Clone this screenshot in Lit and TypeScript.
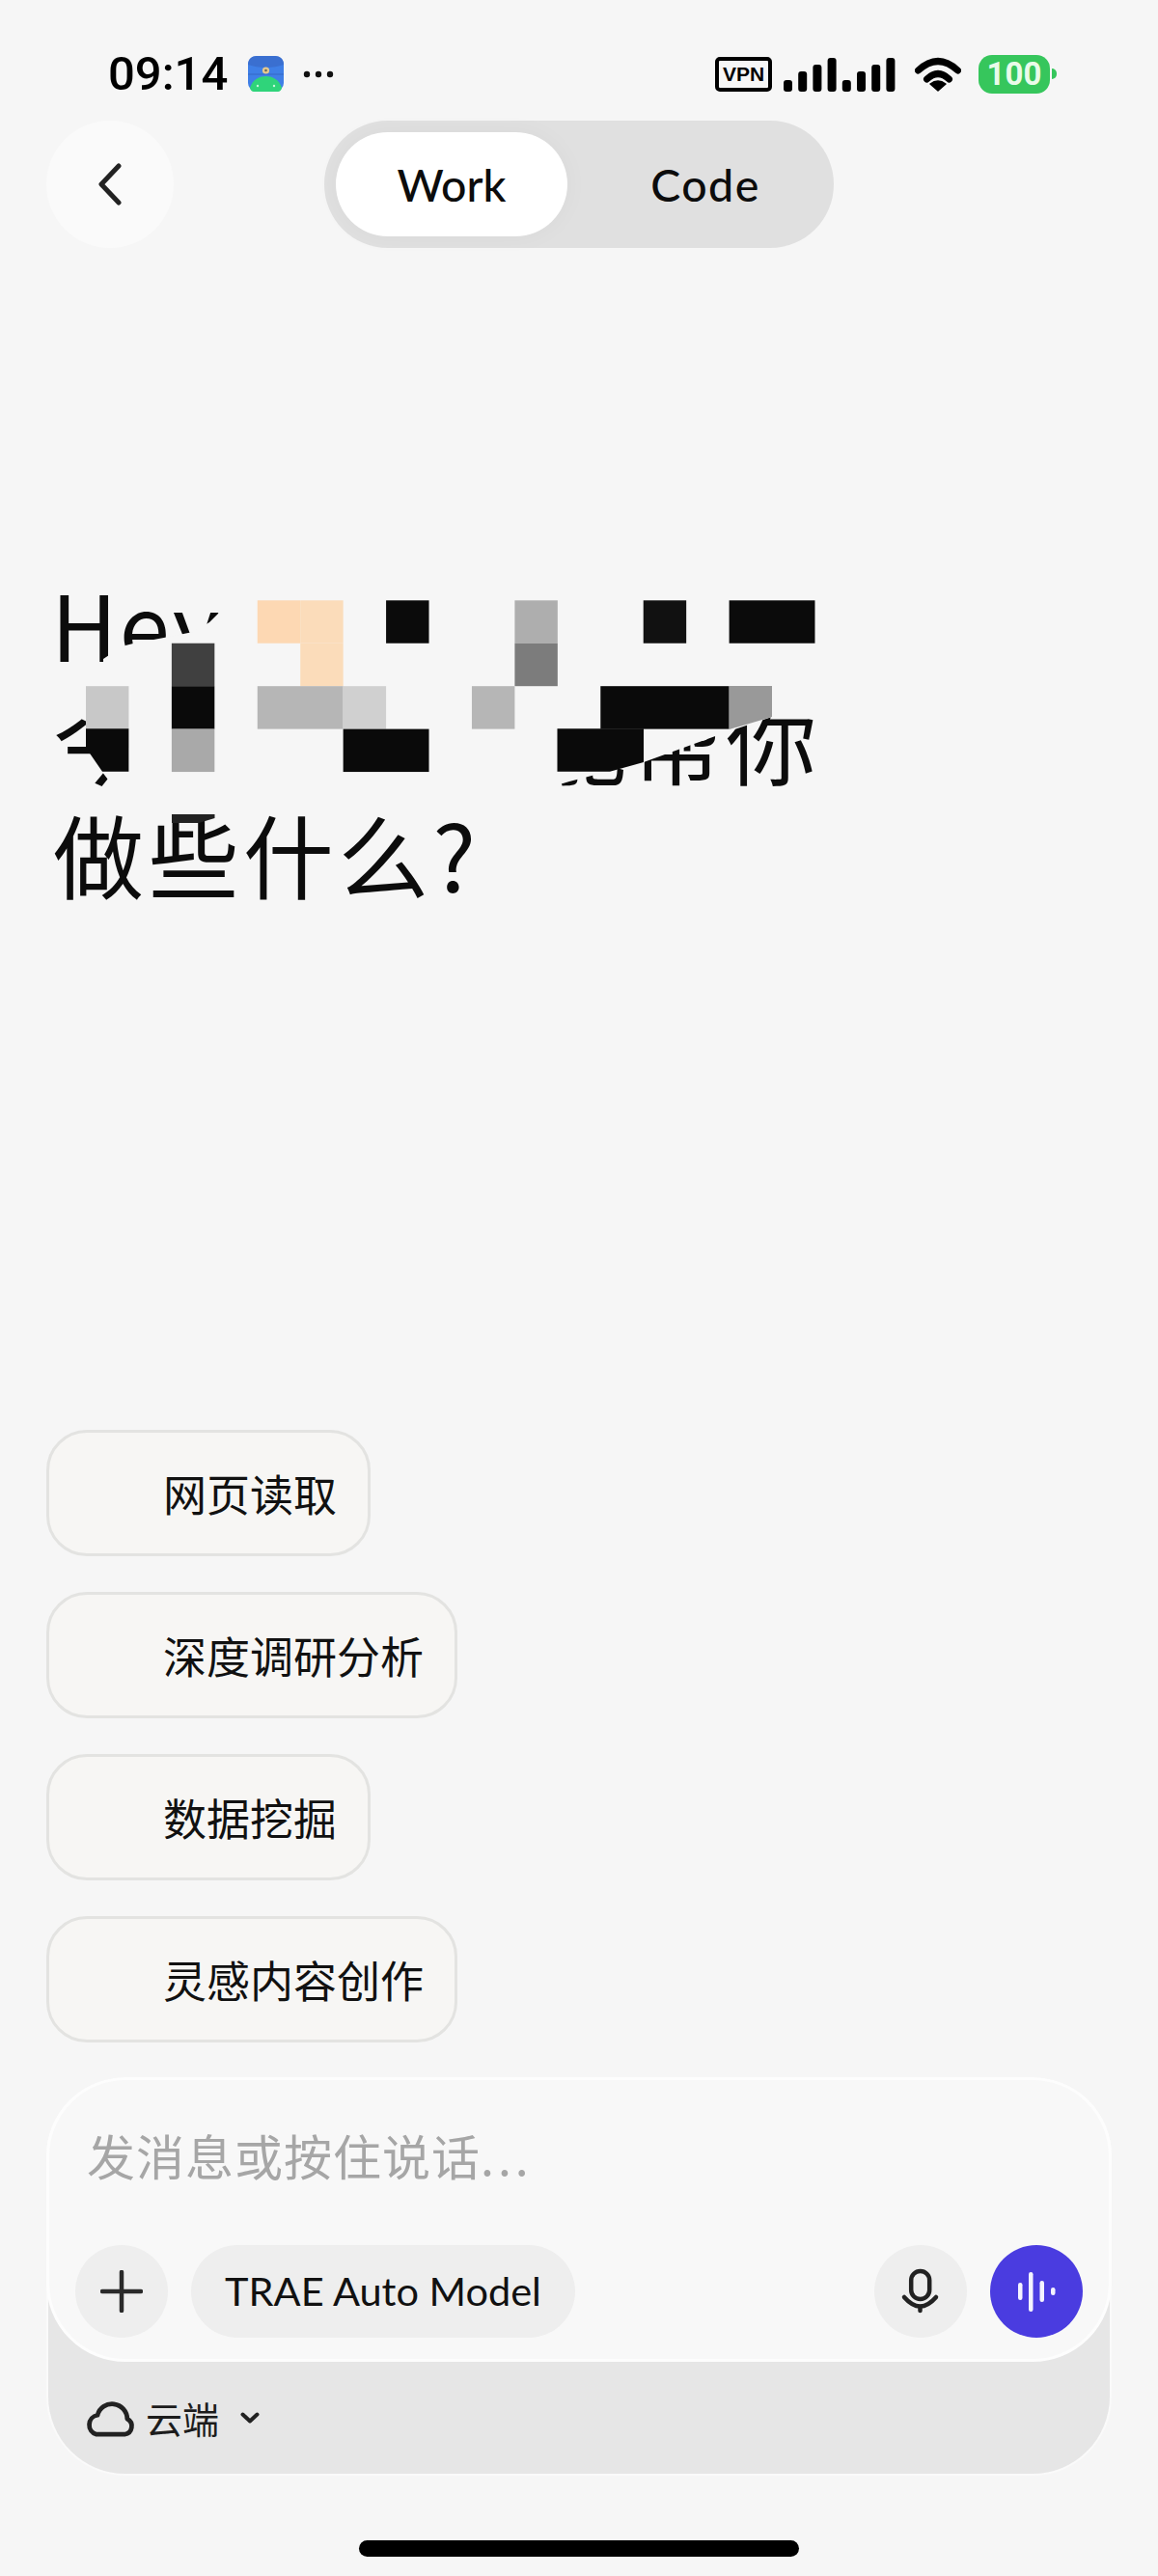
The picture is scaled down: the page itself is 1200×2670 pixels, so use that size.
import { LitElement, html, css, svg } from "lit";
import { customElement } from "lit/decorators.js";

const CELL = 44.44;
const X0 = 89;
const Y0 = 622.3;
// [row, col, span, fill]
const CELLS: [number, number, number, string][] = [
  [0, 4, 1, "#fdd8b3"],
  [0, 5, 1, "#fbdcba"],
  [0, 7, 1, "#0b0b0b"],
  [0, 10, 1, "#aeaeae"],
  [0, 13, 1, "#111111"],
  [0, 15, 2, "#0b0b0b"],
  [1, 2, 1, "#404040"],
  [1, 5, 1, "#fbdcba"],
  [1, 10, 1, "#7c7c7c"],
  [2, 0, 1, "#c8c8c8"],
  [2, 2, 1, "#0a0a0a"],
  [2, 4, 2, "#b6b6b6"],
  [2, 6, 1, "#d0d0d0"],
  [2, 9, 1, "#b6b6b6"],
  [2, 12, 3, "#0a0a0a"],
  [3, 2, 1, "#a9a9a9"],
  [3, 6, 2, "#0a0a0a"],
];
// Cells whose corner is cut by the redaction edge
const CLIPPED: [string, string][] = [
  ["89,755.3 133.4,755.3 133.4,799.7 106,799.7 89,775", "#0a0a0a"],
  ["577.5,755.3 667,755.3 667,790 632,799.7 577.5,799.7", "#0a0a0a"],
  ["755.7,711 800,711 800,743 755.7,756", "#999999"],
  ["178,844 222.5,844 222.5,848 206,853 178,853", "#222222"],
];
const MASK =
  "232,600 852,600 852,735 820,737 800,743 755,758 667,790 590,810 570,816 118,816 102,795 90,775 " +
  "90,748 84,745 84,715 107,690 107,683 116,677 130,669 138,667 175,660 200,655 217,645 232,630";

const SIGNAL = [12, 21, 28, 35, 12, 21, 28, 35];

@customElement("app-root")
export class AppRoot extends LitElement {
  static styles = css`
    :host {
      display: block;
      width: 1200px;
      height: 2670px;
      background: #f6f6f6;
      font-family: "Noto Sans CJK SC", "Noto Sans", sans-serif;
      color: #0c0c0c;
    }
    .page {
      height: 2670px;
      display: flex;
      flex-direction: column;
      overflow: hidden;
    }
    .status {
      margin-top: 56px;
      height: 41px;
      padding: 0 105px 0 112px;
      display: flex;
      align-items: center;
      justify-content: space-between;
    }
    .status-left,
    .status-right {
      display: flex;
      align-items: center;
    }
    .time {
      font: 500 49px/41px Roboto, sans-serif;
      color: #000;
      width: 121px;
    }
    .app-icon {
      margin-left: 24px;
      display: block;
    }
    .more {
      margin-left: 20px;
      display: block;
    }
    .vpn {
      box-sizing: border-box;
      width: 59px;
      height: 36px;
      border: 4px solid #000;
      border-radius: 5px;
      display: flex;
      align-items: center;
      justify-content: center;
      font: 700 21px/1 "Liberation Sans", sans-serif;
      color: #000;
    }
    .signal {
      margin-left: 12px;
      display: block;
    }
    .wifi {
      margin-left: 20px;
      display: block;
    }
    .battery {
      margin-left: 18px;
      display: flex;
      align-items: center;
    }
    .battery-body {
      width: 74px;
      height: 40px;
      background: #36c65c;
      border-radius: 14px;
      display: flex;
      align-items: center;
      justify-content: center;
      font: 700 33px/1 Roboto, sans-serif;
      color: #e9fbe9;
    }
    .battery-nub {
      width: 5px;
      height: 11px;
      margin-left: 2px;
      background: #36c65c;
      border-radius: 0 5px 5px 0;
    }
    .header {
      margin-top: 28px;
      padding: 0 48px;
      display: grid;
      grid-template-columns: 1fr auto 1fr;
      align-items: center;
    }
    .back {
      width: 132px;
      height: 132px;
      border-radius: 50%;
      background: #fafafa;
      display: flex;
      align-items: center;
      justify-content: center;
    }
    .toggle {
      box-sizing: border-box;
      width: 528px;
      height: 132px;
      padding: 12px;
      border-radius: 66px;
      background: #e0e0e0;
      display: flex;
      align-items: center;
      font: 500 46.5px/1 Lato, "Noto Sans", sans-serif;
    }
    .seg {
      height: 108px;
      display: flex;
      align-items: center;
      justify-content: center;
    }
    .seg.on {
      width: 240px;
      border-radius: 54px;
      background: #fff;
      box-shadow: 0 0 26px rgba(0, 0, 0, 0.035);
    }
    .seg.off {
      flex: 1;
      padding-left: 22px;
      letter-spacing: 1.5px;
    }
    .hero {
      position: relative;
      margin-top: 332px;
      padding-left: 55px;
      font-size: 94px;
      line-height: 118px;
      letter-spacing: 4.4px;
      font-weight: 400;
      color: #0c0c0c;
      white-space: nowrap;
    }
    .hey {
      margin: -3px 0 3px -2px;
      letter-spacing: 2.4px;
    }
    .gap {
      display: inline-block;
      width: 402px;
    }
    .redact {
      position: absolute;
      left: 0;
      top: 0;
      display: block;
    }
    .chips {
      margin-top: auto;
      padding-left: 48px;
      display: flex;
      flex-direction: column;
      align-items: flex-start;
      gap: 37px;
    }
    .chip {
      box-sizing: border-box;
      height: 131px;
      padding: 0 32px 0 118px;
      border: 3px solid #e3e3e1;
      border-radius: 42px;
      background: #f7f6f4;
      display: flex;
      align-items: center;
      font-size: 45px;
      line-height: 1;
      color: #111;
    }
    .composer {
      box-sizing: border-box;
      margin: 36px 48px 0;
      height: 413px;
      border: 2px solid #fafafa;
      border-top: 0;
      border-radius: 82px;
      background: #e6e6e6;
      display: flex;
      flex-direction: column;
    }
    .box {
      box-sizing: border-box;
      margin: 0 -2px;
      height: 295px;
      padding: 47px 27px 0;
      border: 3px solid #fdfdfd;
      border-radius: 82px;
      background: #f8f8f8;
    }
    .placeholder {
      padding-left: 12px;
      font-size: 50px;
      line-height: 60px;
      letter-spacing: 1px;
      color: #a6a6a6;
    }
    .dots {
      letter-spacing: 4px;
    }
    .tools {
      margin-top: 64px;
      display: flex;
      align-items: center;
      gap: 24px;
    }
    .round {
      width: 96px;
      height: 96px;
      border-radius: 50%;
      background: #eeeeee;
      display: flex;
      align-items: center;
      justify-content: center;
      flex: none;
    }
    .round svg {
      display: block;
    }
    .model {
      box-sizing: border-box;
      width: 398px;
      height: 96px;
      border-radius: 48px;
      background: #eeeeee;
      display: flex;
      align-items: center;
      justify-content: center;
      font: 400 41.5px/1 Lato, "Noto Sans", sans-serif;
      color: #111;
    }
    .push {
      margin-left: auto;
    }
    .send {
      background: #4a3ce0;
    }
    .scope {
      flex: 1;
      padding-left: 37px;
      display: flex;
      align-items: center;
      font-size: 38px;
      line-height: 1;
      color: #1c1c1c;
    }
    .cloud {
      display: block;
      margin-right: 10px;
    }
    .chev {
      display: block;
      margin-left: 22px;
    }
    .home {
      margin: 67px auto 20px;
      width: 456px;
      height: 17px;
      border-radius: 9px;
      background: #000;
      flex: none;
    }
  `;

  private redaction() {
    return svg`
      <polygon points=${MASK} fill="#f6f6f6"></polygon>
      ${CELLS.map(
        ([r, c, span, fill]) => svg`<rect x=${X0 + c * CELL} y=${Y0 + r * CELL} width=${span * CELL} height=${CELL} fill=${fill}></rect>`
      )}
      ${CLIPPED.map(([points, fill]) => svg`<polygon points=${points} fill=${fill}></polygon>`)}
    `;
  }

  render() {
    return html`
      <div class="page">
        <div class="status">
          <div class="status-left">
            <span class="time">09:14</span>
            <svg class="app-icon" width="37" height="37" viewBox="0 0 37 37">
              <rect width="37" height="37" rx="9" fill="#3f7fe6"></rect>
              <path d="M0 9C0 3 4 0 9 0H28C33 0 37 3 37 9C26 13 11 13 0 9Z" fill="#3a6fd0"></path>
              <path d="M0 19H37" stroke="#3569c4" stroke-width="1"></path>
              <path d="M6 37Q3 37 2 33C5 24 12 21 18.5 21S32 24 35 33Q34 37 31 37Z" fill="#2fd47a"></path>
              <circle cx="18.5" cy="15" r="3.6" fill="#e6c98e"></circle>
              <circle cx="18.5" cy="15" r="1.3" fill="#6b6a55"></circle>
              <circle cx="10" cy="31" r="1.2" fill="#c8f5dc"></circle>
              <circle cx="27" cy="31" r="1.2" fill="#c8f5dc"></circle>
            </svg>
            <svg class="more" width="32" height="8" viewBox="0 0 32 8" fill="#111">
              <circle cx="4" cy="4" r="3.2"></circle>
              <circle cx="16" cy="4" r="3.2"></circle>
              <circle cx="28" cy="4" r="3.2"></circle>
            </svg>
          </div>
          <div class="status-right">
            <span class="vpn">VPN</span>
            <svg class="signal" width="116" height="36" viewBox="0 0 116 36" fill="#000">
              ${SIGNAL.map(
                (h, i) => svg`<rect x=${i * 15.2} y=${36 - h} width="9" height=${h} rx="3"></rect>`
              )}
            </svg>
            <svg class="wifi" width="48" height="36" viewBox="0 0 48 36">
              <path d="M3.5 14Q24 -5 44.5 14" fill="none" stroke="#000" stroke-width="7" stroke-linecap="round"></path>
              <path d="M12.5 23Q24 12 35.5 23" fill="none" stroke="#000" stroke-width="7" stroke-linecap="round"></path>
              <path d="M24 35L16 28Q24 22 32 28Z" fill="#000" stroke="#000" stroke-width="1.5" stroke-linejoin="round"></path>
            </svg>
            <div class="battery">
              <span class="battery-body">100</span>
              <span class="battery-nub"></span>
            </div>
          </div>
        </div>

        <div class="header">
          <div class="back">
            <svg width="24" height="44" viewBox="0 0 24 44">
              <path d="M21 3L3 22L21 41" fill="none" stroke="#222" stroke-width="5" stroke-linecap="round" stroke-linejoin="round"></path>
            </svg>
          </div>
          <div class="toggle">
            <div class="seg on">Work</div>
            <div class="seg off">Code</div>
          </div>
          <div></div>
        </div>

        <div class="hero">
          <div class="hey">Hey</div>
          <div>今<span class="gap"></span>能帮你</div>
          <div>做些什么?</div>
          <svg class="redact" width="1200" height="354" viewBox="0 589 1200 354">${this.redaction()}</svg>
        </div>

        <div class="chips">
          <div class="chip">网页读取</div>
          <div class="chip">深度调研分析</div>
          <div class="chip">数据挖掘</div>
          <div class="chip">灵感内容创作</div>
        </div>

        <div class="composer">
          <div class="box">
            <div class="placeholder">发消息或按住说话<span class="dots">...</span></div>
            <div class="tools">
              <div class="round">
                <svg width="44" height="44" viewBox="0 0 44 44">
                  <path d="M22 2V42M2 22H42" fill="none" stroke="#2a2a2a" stroke-width="4.5" stroke-linecap="round"></path>
                </svg>
              </div>
              <div class="model">TRAE Auto Model</div>
              <div class="round push">
                <svg width="96" height="96" viewBox="0 0 96 96" fill="none" stroke="#222">
                  <rect x="38.2" y="27" width="19" height="29" rx="9.5" stroke-width="4.5"></rect>
                  <path d="M31 54Q47.5 73 64 54" stroke-width="4.5" stroke-linecap="round"></path>
                  <path d="M47.5 64V68" stroke-width="4.5" stroke-linecap="round"></path>
                </svg>
              </div>
              <div class="round send">
                <svg width="96" height="96" viewBox="0 0 96 96" fill="#f4f3ff">
                  <rect x="29" y="39" width="4.5" height="18" rx="2.2"></rect>
                  <rect x="40" y="28" width="4.5" height="41" rx="2.2"></rect>
                  <rect x="51.5" y="37" width="4.5" height="22" rx="2.2"></rect>
                  <rect x="63" y="44" width="4.5" height="8" rx="2.2"></rect>
                </svg>
              </div>
            </div>
          </div>
          <div class="scope">
            <svg class="cloud" width="54" height="39" viewBox="0 0 50 36">
              <path d="M12 33.5H39A8 8 0 0 0 41.5 18.5A14.5 14.5 0 0 0 13 15A9.5 9.5 0 0 0 12 33.5Z" fill="none" stroke="#222" stroke-width="4.4" stroke-linejoin="round"></path>
            </svg>
            <span>云端</span>
            <svg class="chev" width="20" height="12" viewBox="0 0 20 12">
              <path d="M2.5 2.5L10 9.5L17.5 2.5" fill="none" stroke="#222" stroke-width="4" stroke-linecap="round" stroke-linejoin="round"></path>
            </svg>
          </div>
        </div>

        <div class="home"></div>
      </div>
    `;
  }
}
